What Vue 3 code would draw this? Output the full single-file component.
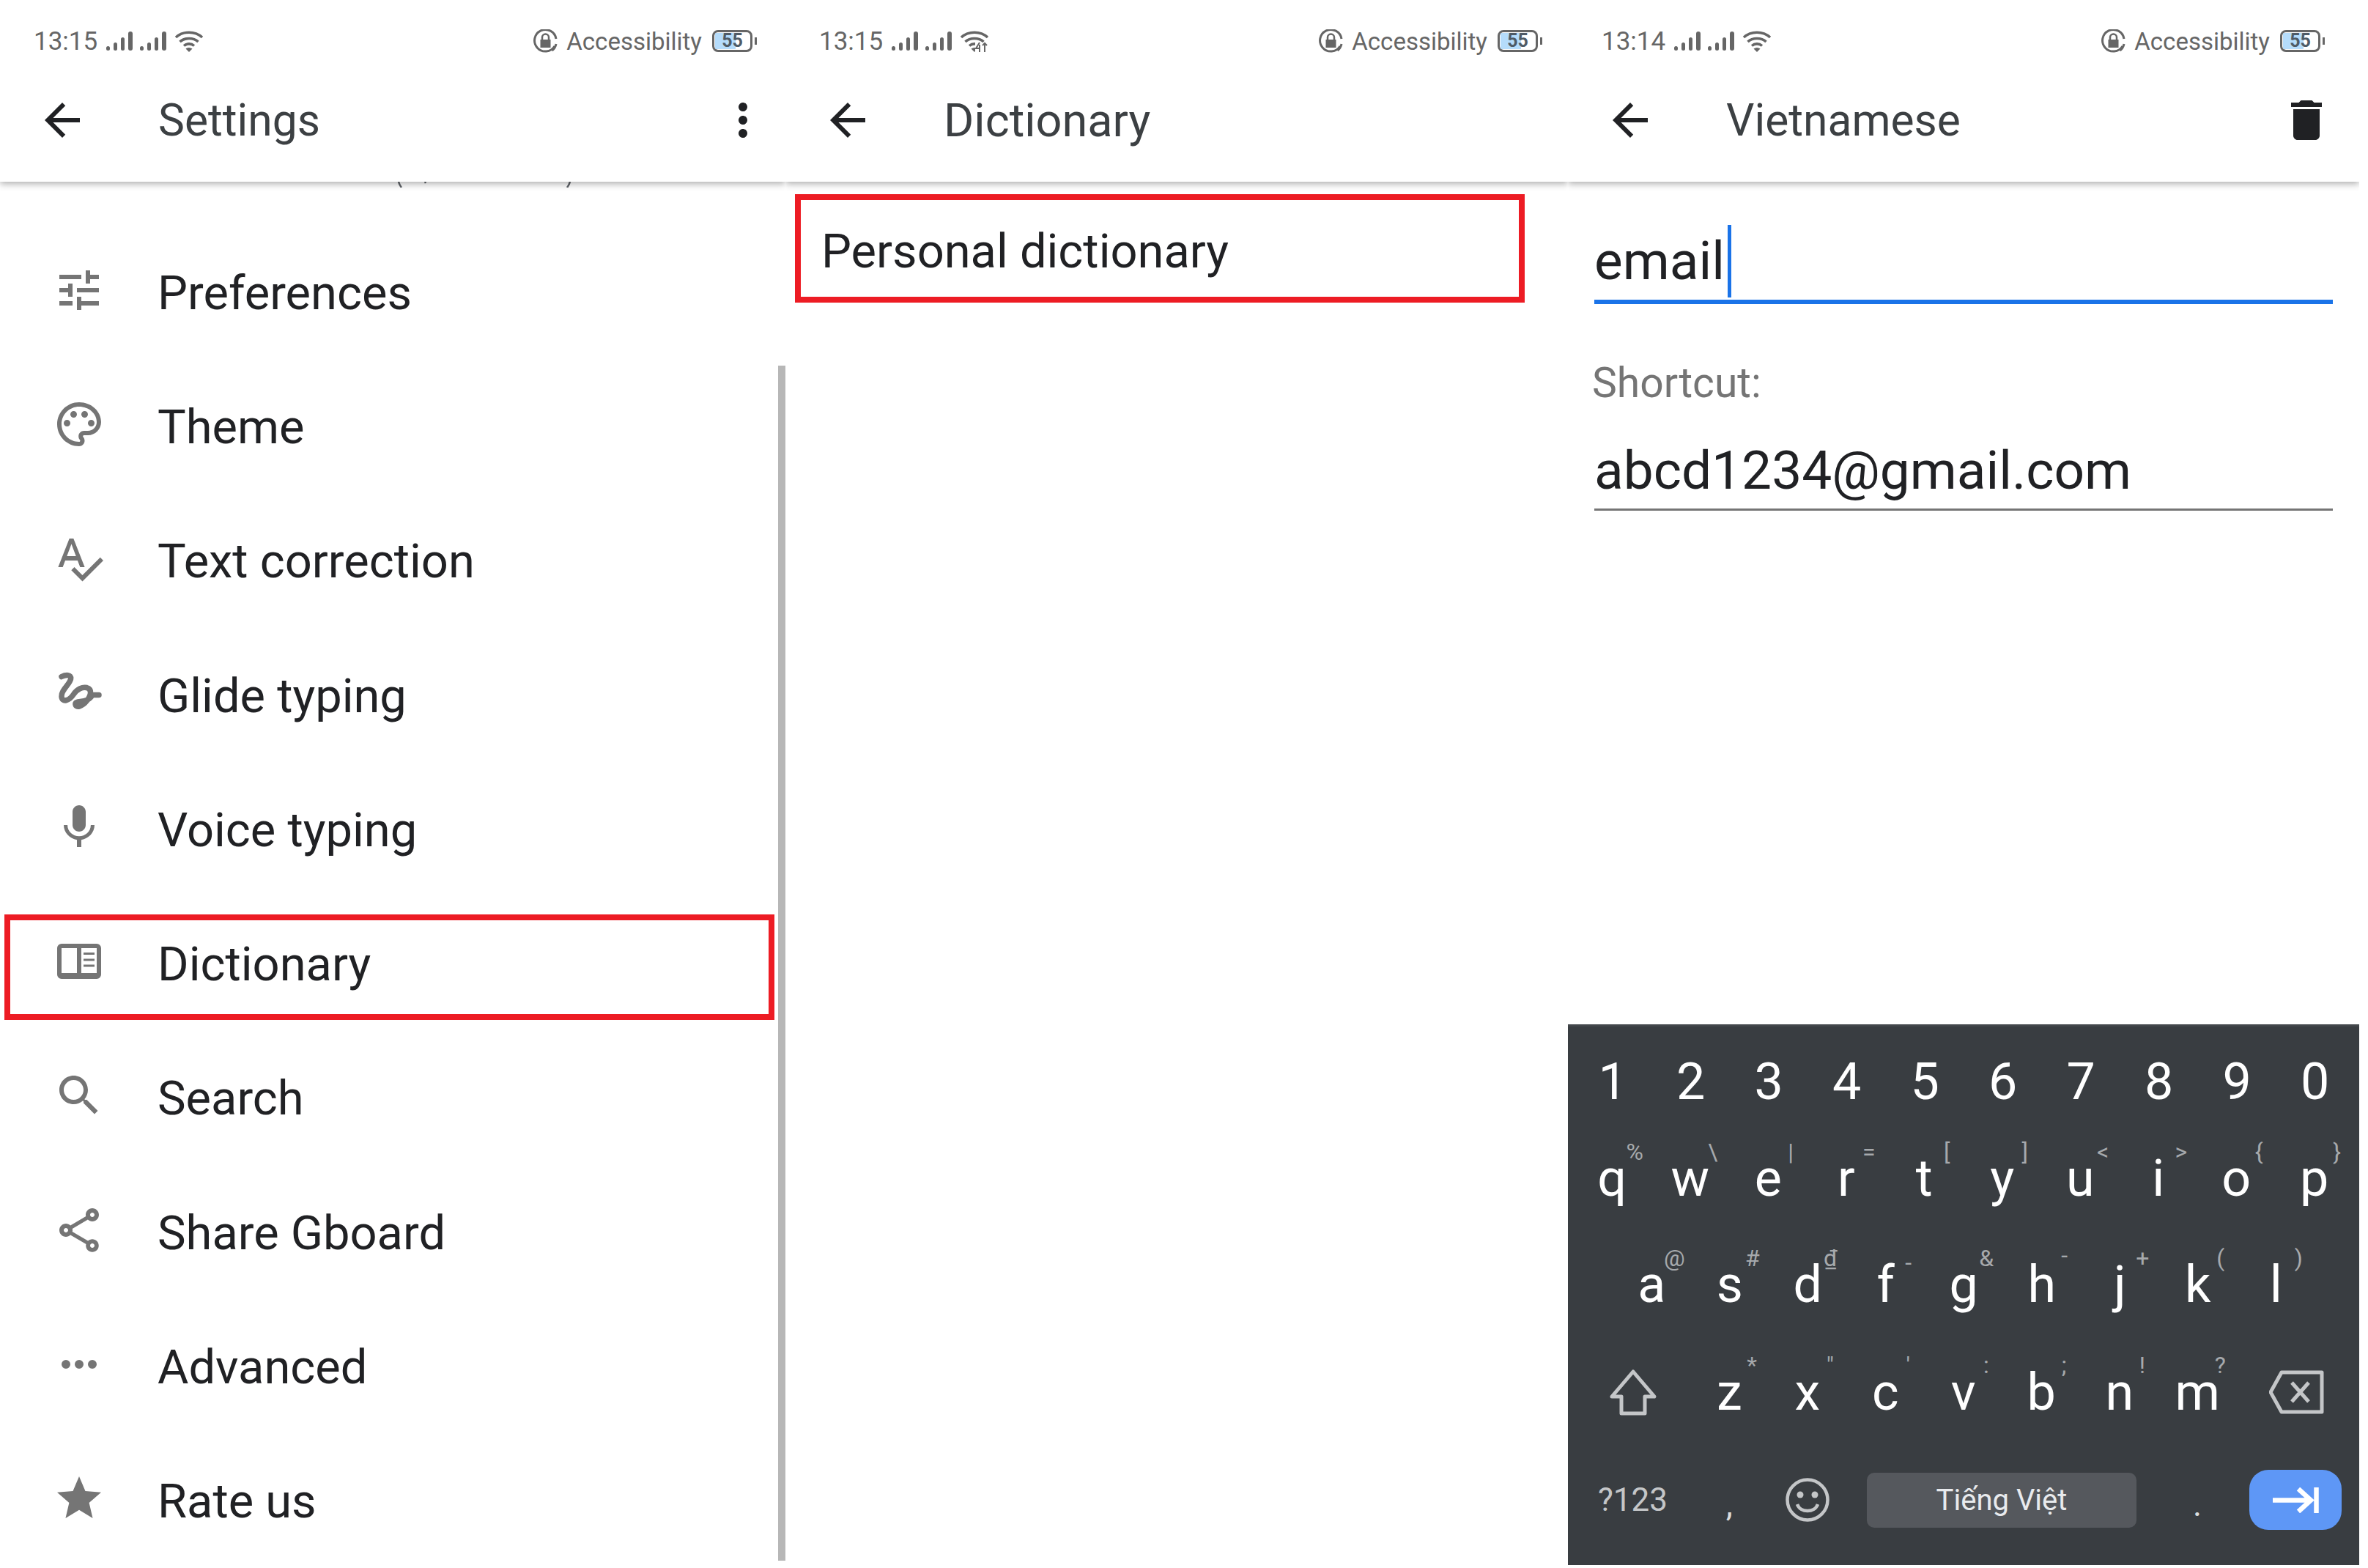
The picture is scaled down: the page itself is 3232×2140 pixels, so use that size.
<script setup>
const back = "M20 11H7.83l5.59-5.59L12 4l-8 8 8 8 1.41-1.41L7.83 13H20v-2z";

const menu = [
  { label: "Preferences", d: "M3 17v2h6v-2H3zM3 5v2h10V5H3zm10 16v-2h8v-2h-8v-2h-2v6h2zM7 9v2H3v2h4v2h2V9H7zm14 4v-2H11v2h10zm-6-4h2V7h4V5h-4V3h-2v6z" },
  { label: "Theme", d: "M12 22C6.49 22 2 17.51 2 12S6.49 2 12 2s10 4.04 10 9c0 3.31-2.69 6-6 6h-1.77c-.28 0-.5.22-.5.5 0 .12.05.23.13.33.41.47.64 1.06.64 1.67 0 1.38-1.12 2.5-2.5 2.5zm0-18c-4.41 0-8 3.59-8 8s3.59 8 8 8c.28 0 .5-.22.5-.5 0-.16-.08-.28-.14-.35-.41-.46-.63-1.05-.63-1.65 0-1.38 1.12-2.5 2.5-2.5H16c2.21 0 4-1.79 4-4 0-3.86-3.59-7-8-7zM5 11.5a1.5 1.5 0 1 0 3 0a1.5 1.5 0 1 0-3 0zM8 7.5a1.5 1.5 0 1 0 3 0a1.5 1.5 0 1 0-3 0zM13 7.5a1.5 1.5 0 1 0 3 0a1.5 1.5 0 1 0-3 0zM16 11.5a1.5 1.5 0 1 0 3 0a1.5 1.5 0 1 0-3 0z" },
  { label: "Text correction", d: "M12.45 16h2.09L9.43 3H7.57L2.46 16h2.09l1.12-3h5.64l1.14 3zm-6.02-5L8.5 5.48 10.57 11H6.43zm15.16.59l-8.09 8.09L9.83 16l-1.41 1.41 5.09 5.09L23 13l-1.41-1.41z" },
  { label: "Glide typing", stroke: "M4 4.500C6 3.500 8.500 3.500 8.200 5.500C7.800 8 3.800 10.500 4 13.500C4.200 16.500 7.500 15.500 9.500 12.500C11 10.200 13.500 9 15.500 9.500C18 10.200 17.500 13 15.500 15.500C13.500 18 10.500 19 10.300 17C10.200 15 16 17 18 12.800L21 12.800" },
  { label: "Voice typing", d: "M12 14c1.66 0 2.99-1.34 2.99-3L15 5c0-1.66-1.34-3-3-3S9 3.34 9 5v6c0 1.66 1.34 3 3 3zm5.3-3c0 3-2.54 5.1-5.3 5.1S6.7 14 6.7 11H5c0 3.41 2.72 6.23 6 6.72V21h2v-3.28c3.28-.48 6-3.3 6-6.72h-1.7z" },
  { label: "Dictionary", marked: true, d: "M4 4h16a2 2 0 0 1 2 2v12a2 2 0 0 1-2 2H4a2 2 0 0 1-2-2V6a2 2 0 0 1 2-2zM4 6v11.3h7V6zM13 6v11.3h7V6zM14 8h5v1h-5zM14 10.8h5v1h-5zM14 13.5h5v1h-5z" },
  { label: "Search", d: "M15.5 14h-.79l-.28-.27C15.41 12.59 16 11.11 16 9.5 16 5.91 13.09 3 9.5 3S3 5.91 3 9.5 5.91 16 9.5 16c1.61 0 3.09-.59 4.23-1.57l.27.28v.79l5 4.99L20.49 19l-4.99-5zm-6 0C7.01 14 5 11.99 5 9.5S7.01 5 9.5 5 14 7.01 14 9.5 11.99 14 9.5 14z" },
  { label: "Share Gboard", d: "M18 16.08c-.76 0-1.44.3-1.96.77L8.91 12.7c.05-.23.09-.46.09-.7s-.04-.47-.09-.7l7.05-4.11c.54.5 1.25.81 2.04.81 1.66 0 3-1.34 3-3s-1.34-3-3-3-3 1.34-3 3c0 .24.04.47.09.7L8.04 9.81C7.5 9.31 6.79 9 6 9c-1.66 0-3 1.34-3 3s1.34 3 3 3c.79 0 1.5-.31 2.04-.81l7.12 4.16c-.05.21-.08.43-.08.65 0 1.61 1.31 2.92 2.92 2.92s2.92-1.31 2.92-2.92c0-1.61-1.31-2.92-2.92-2.92zM18 4c.55 0 1 .45 1 1s-.45 1-1 1-1-.45-1-1 .45-1 1-1zM6 13c-.55 0-1-.45-1-1s.45-1 1-1 1 .45 1 1-.45 1-1 1zm12 7.02c-.55 0-1-.45-1-1s.45-1 1-1 1 .45 1 1-.45 1-1 1z" },
  { label: "Advanced", d: "M4 12a2 2 0 1 0 4 0a2 2 0 1 0-4 0zM10 12a2 2 0 1 0 4 0a2 2 0 1 0-4 0zM16 12a2 2 0 1 0 4 0a2 2 0 1 0-4 0z" },
  { label: "Rate us", d: "M12 17.27L18.18 21l-1.64-7.03L22 9.24l-7.19-.61L12 2 9.19 8.63 2 9.24l5.46 4.73L5.82 21z" },
];

const screens = [
  { id: "settings", time: "13:15", title: "Settings" },
  { id: "dictionary", time: "13:15", title: "Dictionary", lte: true },
  { id: "word", time: "13:14", title: "Vietnamese" },
];

// hint offsets: dy moves a symbol off the common baseline
const rows = [
  { h: 132, pad: 8, keys: [["1"], ["2"], ["3"], ["4"], ["5"], ["6"], ["7"], ["8"], ["9"], ["0"]] },
  { h: 145, pad: 7, keys: [["q", "%"], ["w", "\\"], ["e", "|"], ["r", "="], ["t", "["], ["y", "]"], ["u", "<"], ["i", ">"], ["o", "{"], ["p", "}"]] },
  { h: 147, pad: 61, keys: [["a", "@"], ["s", "#"], ["d", "₫"], ["f", "-", 6], ["g", "&"], ["h", "-", -4], ["j", "+"], ["k", "("], ["l", ")"]] },
];
const lastLetters = [["z", "*"], ["x", "\""], ["c", "'"], ["v", ":"], ["b", ";"], ["n", "!"], ["m", "?"]];
</script>

<template>
  <div class="page">
    <section v-for="s in screens" :key="s.id" class="phone" :class="s.id">
      <header class="top">
        <div class="status">
          <span class="time">{{ s.time }}</span>
          <svg v-for="n in 2" :key="n" class="signal" viewBox="0 0 36 26" width="36" height="26">
            <rect x="0" y="20" width="5" height="6" rx="2.5" />
            <rect x="10" y="15" width="5" height="11" rx="2.5" />
            <rect x="20" y="8" width="5" height="18" rx="2.5" />
            <rect x="30" y="0" width="6" height="26" rx="3" />
          </svg>
          <svg class="wifi" viewBox="0 0 40 30" width="40" height="30">
            <path d="M2 10C12 1 28 1 38 10M7.500 16C14 10 26 10 32.500 16" fill="none" stroke="#666" stroke-width="3.600" />
            <path d="M13 21.500C17 18 23 18 27 21.500" fill="none" stroke="#666" stroke-width="3.600" />
            <path d="M15.500 25.500Q20 22.500 24.500 25.500L20 30z" fill="#666" />
            <g v-if="s.lte">
              <rect x="21" y="17" width="19" height="13" fill="#fff" />
              <path d="M27 17l-5 8h6M27 20v10M34 30v-12M31 21l3-3 3 3" fill="none" stroke="#666" stroke-width="2" />
            </g>
          </svg>
          <span class="spacer"></span>
          <svg class="lock" viewBox="0 0 33 33" width="33" height="33">
            <path d="M29 23A14.800 14.800 0 1 1 31 13M25.500 29A14.800 14.800 0 0 0 31 20" fill="none" stroke="#666" stroke-width="3" />
            <rect x="9.500" y="14" width="14" height="11" fill="#666" />
            <path d="M12 14v-3a4.500 4.500 0 0 1 9 0v3" fill="none" stroke="#666" stroke-width="2.500" />
          </svg>
          <span class="access">Accessibility</span>
          <div class="battery"><span class="level"></span><span class="pct">55</span></div>
          <span class="nub"></span>
        </div>
        <div class="bar">
          <svg class="back" viewBox="0 0 24 24" width="72" height="72"><path :d="back" /></svg>
          <span class="title">{{ s.title }}</span>
          <svg v-if="s.id === 'settings'" class="action more" viewBox="0 0 24 24" width="72" height="72">
            <path d="M12 8c1.100 0 2-.9 2-2s-.9-2-2-2-2 .9-2 2 .9 2 2 2zm0 2c-1.100 0-2 .9-2 2s.9 2 2 2 2-.9 2-2-.9-2-2-2zm0 6c-1.100 0-2 .9-2 2s.9 2 2 2 2-.9 2-2-.9-2-2-2z" />
          </svg>
          <svg v-if="s.id === 'word'" class="action trash" viewBox="0 0 24 24" width="72" height="72">
            <path d="M6 19c0 1.100.9 2 2 2h8c1.100 0 2-.9 2-2V7H6v12zM19 4h-3.500l-1-1h-5l-1 1H5v2h14V4z" />
          </svg>
        </div>
      </header>

      <template v-if="s.id === 'settings'">
        <svg class="peek" viewBox="0 0 240 8" width="240" height="8">
          <path d="M2 0q1 4 4 8M38 0l1 2M236 0q-1 4-4 8" fill="none" stroke="#5f6368" stroke-width="2.500" />
        </svg>
        <ul class="menu">
          <li v-for="item in menu" :key="item.label" class="row">
            <svg class="icon" viewBox="0 0 24 24" width="72" height="72">
              <path v-if="item.d" :d="item.d" fill-rule="evenodd" />
              <path v-else :d="item.stroke" fill="none" stroke="#757575" stroke-width="2.500" stroke-linecap="round" />
            </svg>
            <span class="label">{{ item.label }}</span>
            <span v-if="item.marked" class="mark"></span>
          </li>
        </ul>
        <span class="scrollbar"></span>
      </template>

      <div v-else-if="s.id === 'dictionary'" class="personal">Personal dictionary</div>

      <template v-else>
        <div class="form">
          <div class="field active">email<span class="caret"></span></div>
          <div class="caption">Shortcut:</div>
          <div class="field">abcd1234@gmail.com</div>
        </div>

        <div class="keyboard">
          <div v-for="(row, i) in rows" :key="i" class="kb-row" :style="{ height: row.h + 'px', paddingLeft: row.pad + 'px' }">
            <div v-for="k in row.keys" :key="k[0]" class="key">
              {{ k[0] }}
              <span v-if="k[1]" class="hint" :style="k[2] ? { marginTop: k[2] + 'px' } : null">{{ k[1] }}</span>
            </div>
          </div>
          <div class="kb-row letters3">
            <div class="key wide">
              <svg viewBox="0 0 66 65" width="66" height="65"><path d="M33 4L62 38H49V61H17V38H4Z" fill="none" stroke="#c4c6c8" stroke-width="5" stroke-linejoin="round" /></svg>
            </div>
            <div v-for="k in lastLetters" :key="k[0]" class="key">
              {{ k[0] }}<span class="hint low">{{ k[1] }}</span>
            </div>
            <div class="key wide">
              <svg viewBox="0 0 75 60" width="75" height="60"><path d="M2 30L17 3H72V57H17ZM31 17L54 43M54 17L31 43" fill="none" stroke="#c4c6c8" stroke-width="5" stroke-linejoin="round" /></svg>
            </div>
          </div>
          <div class="kb-row bottom">
            <div class="key wide sym">?123</div>
            <div class="key punct">,</div>
            <div class="key">
              <svg viewBox="0 0 60 60" width="60" height="60">
                <circle cx="30" cy="30" r="27.500" fill="none" stroke="#c4c6c8" stroke-width="4.500" />
                <circle cx="20" cy="23" r="4.500" fill="#c4c6c8" />
                <circle cx="40" cy="23" r="4.500" fill="#c4c6c8" />
                <path d="M16 36c4 12 24 12 28 0" fill="none" stroke="#c4c6c8" stroke-width="4.500" />
              </svg>
            </div>
            <div class="space">Tiếng Việt</div>
            <div class="key period punct">.</div>
            <div class="enter">
              <svg viewBox="0 0 63 35" width="63" height="35"><path d="M0 17.500H52M35 2L52 17.500L35 33M59.500 0V35" fill="none" stroke="#fff" stroke-width="6.500" /></svg>
            </div>
          </div>
        </div>
      </template>
    </section>
  </div>
</template>

<style scoped>
.page {
  display: flex;
  align-items: flex-start;
  font-family: Roboto, "Liberation Sans", sans-serif;
  color: #202124;
}
.phone {
  position: relative;
  display: flex;
  flex-direction: column;
  overflow: hidden;
  height: 2136px;
}
.settings { width: 1072px; height: 2130px; }
.dictionary { width: 1068px; }
.word { width: 1080px; }

.top {
  position: relative;
  z-index: 2;
  height: 248px;
  background: #fff;
  box-shadow: 0 3px 9px rgba(0, 0, 0, 0.32);
}
.status {
  display: flex;
  align-items: center;
  box-sizing: border-box;
  width: 1080px;
  height: 80px;
  padding: 32px 47px 0 46px;
  color: #666;
}
.time { font-size: 35px; margin-right: 12px; }
.signal { fill: #666; margin-right: 10px; }
.wifi { margin-left: 1px; }
.spacer { flex: 1; }
.lock { margin-right: 12px; }
.access { font-size: 33px; margin-right: 14px; }
.battery {
  position: relative;
  box-sizing: border-box;
  width: 55px;
  height: 30px;
  border: 3px solid #666;
  border-radius: 8px;
  text-align: center;
  overflow: hidden;
}
.level {
  position: absolute;
  left: 1px;
  top: 1px;
  bottom: 1px;
  width: 28px;
  background: #b5dcfb;
}
.pct {
  position: relative;
  display: block;
  font-size: 25px;
  font-weight: 700;
  line-height: 24px;
  color: #4f5b66;
}
.nub {
  width: 3px;
  height: 10px;
  margin-left: 3px;
  background: #666;
}

.bar {
  display: flex;
  align-items: center;
  width: 1080px;
  height: 168px;
}
.back {
  margin-left: 49px;
  margin-right: 95px;
  fill: #202124;
}
.title {
  font-size: 60.5px;
  color: #3c4043;
}
.dictionary .title { font-size: 63px; }
.action {
  margin-left: auto;
  fill: #202124;
}
.more { margin-right: 30px; }
.trash { margin-right: 36px; }

.peek {
  position: absolute;
  left: 542px;
  top: 248px;
  z-index: 1;
}
.menu {
  list-style: none;
  margin: 0;
  padding: 60px 0 0;
}
.row {
  position: relative;
  display: flex;
  align-items: center;
  height: 183.3px;
  padding-left: 72px;
}
.icon {
  flex: none;
  margin-right: 71px;
  margin-bottom: 8px;
  fill: #757575;
}
.label { font-size: 65px; }
.mark {
  position: absolute;
  left: 6px;
  top: 24px;
  box-sizing: border-box;
  width: 1051px;
  height: 144px;
  border: 8px solid #ed1c24;
}
.scrollbar {
  position: absolute;
  right: 0;
  top: 499px;
  bottom: 0;
  width: 10px;
  background: #b7b7b7;
}

.personal {
  box-sizing: border-box;
  width: 996px;
  height: 148px;
  margin: 17px 0 0 13px;
  padding-left: 28px;
  border: 8px solid #ed1c24;
  font-size: 65px;
  line-height: 140px;
}

.form {
  display: flex;
  flex-direction: column;
  padding: 58px 36px 0;
}
.field {
  font-size: 73px;
  line-height: 100px;
  padding-bottom: 2px;
  border-bottom: 3px solid #757575;
}
.field.active {
  border-bottom: 6px solid #1a73e8;
  padding-bottom: 3px;
}
.caret {
  display: inline-block;
  width: 5px;
  height: 99px;
  margin-left: 4px;
  vertical-align: -25px;
  background: #1a73e8;
}
.caption {
  margin: 73px 0 34px -3px;
  font-size: 57px;
  line-height: 70px;
  color: #757575;
}

.keyboard {
  margin-top: auto;
  box-sizing: border-box;
  height: 738px;
  padding-top: 25px;
  border-top: 3px solid #43474b;
  background: #393d41;
  color: #fff;
}
.kb-row {
  display: flex;
  box-sizing: border-box;
}
.key {
  position: relative;
  display: flex;
  justify-content: center;
  align-items: center;
  flex: none;
  width: 106.5px;
  height: 100px;
  font-size: 70px;
  line-height: 100px;
}
.key.wide { width: 157px; }
.hint {
  position: absolute;
  left: calc(50% + 31px);
  top: -2px;
  transform: translateX(-50%);
  font-size: 32px;
  line-height: 32px;
  color: #a6a9ac;
}
.hint.low { top: -3px; }
.letters3 {
  height: 145px;
  padding-left: 10px;
}
.letters3 .key:last-child { width: 163px; }
.bottom {
  align-items: center;
  height: 104px;
  padding-left: 10px;
}
.sym {
  font-size: 44px;
  color: #c4c6c8;
}
.punct {
  padding-top: 12px;
  font-size: 46px;
  color: #dcdddd;
}
.space {
  width: 368px;
  height: 75px;
  margin-left: 28px;
  border-radius: 10px;
  background: #55585d;
  color: #e8eaed;
  font-size: 40px;
  line-height: 75px;
  text-align: center;
}
.key.period {
  width: 154px;
  padding-left: 12px;
  box-sizing: border-box;
}
.enter {
  display: flex;
  justify-content: center;
  align-items: center;
  width: 126px;
  height: 82px;
  border-radius: 26px;
  background: #5e97f6;
}
</style>

<style>
html, body { background: #fff; }
</style>
